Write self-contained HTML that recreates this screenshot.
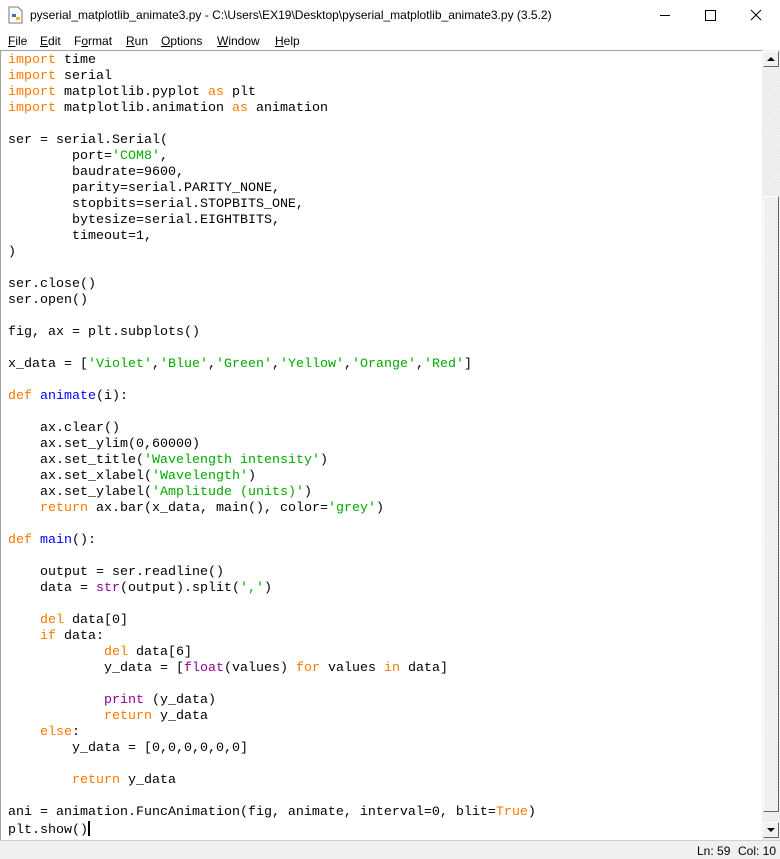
<!DOCTYPE html>
<html><head><style>
body{margin:0;width:780px;height:859px;background:#fff;overflow:hidden;font-family:"Liberation Sans",sans-serif;position:relative}
.title{position:absolute;top:0;left:0;width:780px;height:30px;background:#fff;font-size:12px;color:#000}
.title span.t{position:absolute;left:30px;top:8px}
.menu{position:absolute;top:30px;left:0;width:780px;height:20px;font-size:12px;background:#fff}
.menu span{position:absolute;top:4px}
.menu u{text-decoration:underline}
.ed{position:absolute;top:50px;left:0;width:762px;height:790px;border-top:1px solid #a0a0a0;border-left:1px solid #a0a0a0;box-sizing:border-box;background:#fff}
pre{margin:0;position:absolute;left:7px;top:2px;font-family:"Liberation Mono",monospace;font-size:13.33px;line-height:16px;color:#000}
.k{color:#ff7700}.s{color:#00aa00}.b{color:#900090}.f{color:#0000ff}
.sb{position:absolute;left:762px;top:50px;width:18px;height:790px;background:#f0f0f0;background-image:repeating-linear-gradient(45deg,#f4f4f4 0 1px,#e8e8e8 1px 2px)}
.btn{position:absolute;left:1px;width:16px;height:16px;background:#f0f0f0;border-right:1px solid #696969;border-bottom:1px solid #696969;border-top:1px solid #fff;border-left:1px solid #fff;box-sizing:border-box}
.status{position:absolute;top:840px;left:0;width:780px;height:19px;background:#f0f0f0;border-top:1px solid #d0d0d0;box-sizing:border-box;font-size:12px}
</style></head><body>
<div class="title">
<svg style="position:absolute;left:8px;top:6px" width="16" height="18" viewBox="0 0 16 18"><path d="M1 1h9l4 4v12H1z" fill="#fff" stroke="#777"/><path d="M4 8h4v3H4z" fill="#3a6fb0"/><path d="M8 11h4v3H8z" fill="#e0c030"/></svg>
<span class="t">pyserial_matplotlib_animate3.py - C:\Users\EX19\Desktop\pyserial_matplotlib_animate3.py (3.5.2)</span>
<div style="position:absolute;left:660px;top:15px;width:10px;height:1px;background:#000"></div>
<div style="position:absolute;left:705px;top:10px;width:9px;height:9px;border:1px solid #000"></div>
<svg style="position:absolute;left:750px;top:9px" width="12" height="12"><path d="M1 1L11 11M11 1L1 11" stroke="#000" stroke-width="1"/></svg>
</div>
<div class="menu">
<span style="left:8px"><u>F</u>ile</span>
<span style="left:40px"><u>E</u>dit</span>
<span style="left:74px">F<u>o</u>rmat</span>
<span style="left:126px"><u>R</u>un</span>
<span style="left:161px"><u>O</u>ptions</span>
<span style="left:217px"><u>W</u>indow</span>
<span style="left:275px"><u>H</u>elp</span>
</div>
<div class="ed"><pre><span class="k">import</span> time
<span class="k">import</span> serial
<span class="k">import</span> matplotlib.pyplot <span class="k">as</span> plt
<span class="k">import</span> matplotlib.animation <span class="k">as</span> animation

ser = serial.Serial(
        port=<span class="s">'COM8'</span>,
        baudrate=9600,
        parity=serial.PARITY_NONE,
        stopbits=serial.STOPBITS_ONE,
        bytesize=serial.EIGHTBITS,
        timeout=1,
)

ser.close()
ser.open()

fig, ax = plt.subplots()

x_data = [<span class="s">'Violet'</span>,<span class="s">'Blue'</span>,<span class="s">'Green'</span>,<span class="s">'Yellow'</span>,<span class="s">'Orange'</span>,<span class="s">'Red'</span>]

<span class="k">def</span> <span class="f">animate</span>(i):

    ax.clear()
    ax.set_ylim(0,60000)
    ax.set_title(<span class="s">'Wavelength intensity'</span>)
    ax.set_xlabel(<span class="s">'Wavelength'</span>)
    ax.set_ylabel(<span class="s">'Amplitude (units)'</span>)
    <span class="k">return</span> ax.bar(x_data, main(), color=<span class="s">'grey'</span>)

<span class="k">def</span> <span class="f">main</span>():

    output = ser.readline()
    data = <span class="b">str</span>(output).split(<span class="s">','</span>)

    <span class="k">del</span> data[0]
    <span class="k">if</span> data:
            <span class="k">del</span> data[6]
            y_data = [<span class="b">float</span>(values) <span class="k">for</span> values <span class="k">in</span> data]

            <span class="b">print</span> (y_data)
            <span class="k">return</span> y_data
    <span class="k">else</span>:
        y_data = [0,0,0,0,0,0]

        <span class="k">return</span> y_data

ani = animation.FuncAnimation(fig, animate, interval=0, blit=<span class="k">True</span>)
plt.show()<span style="display:inline-block;width:2px;height:15px;background:#000;vertical-align:-3px"></span></pre></div>
<div class="sb">
<div class="btn" style="top:1px"><svg width="14" height="14" style="position:absolute;left:0;top:0"><path d="M3 9L7 5L11 9z" fill="#000"/></svg></div>
<div style="position:absolute;left:1px;top:146px;width:16px;height:616px;background:#f0f0f0;border:1px solid;border-color:#fff #696969 #696969 #fff;box-sizing:border-box"></div>
<div class="btn" style="top:772px"><svg width="14" height="14" style="position:absolute;left:0;top:0"><path d="M3 5L7 9L11 5z" fill="#000"/></svg></div>
</div>
<div class="status"><span style="position:absolute;left:697px;top:3px">Ln: 59</span><span style="position:absolute;left:738px;top:3px">Col: 10</span></div>
</body></html>
